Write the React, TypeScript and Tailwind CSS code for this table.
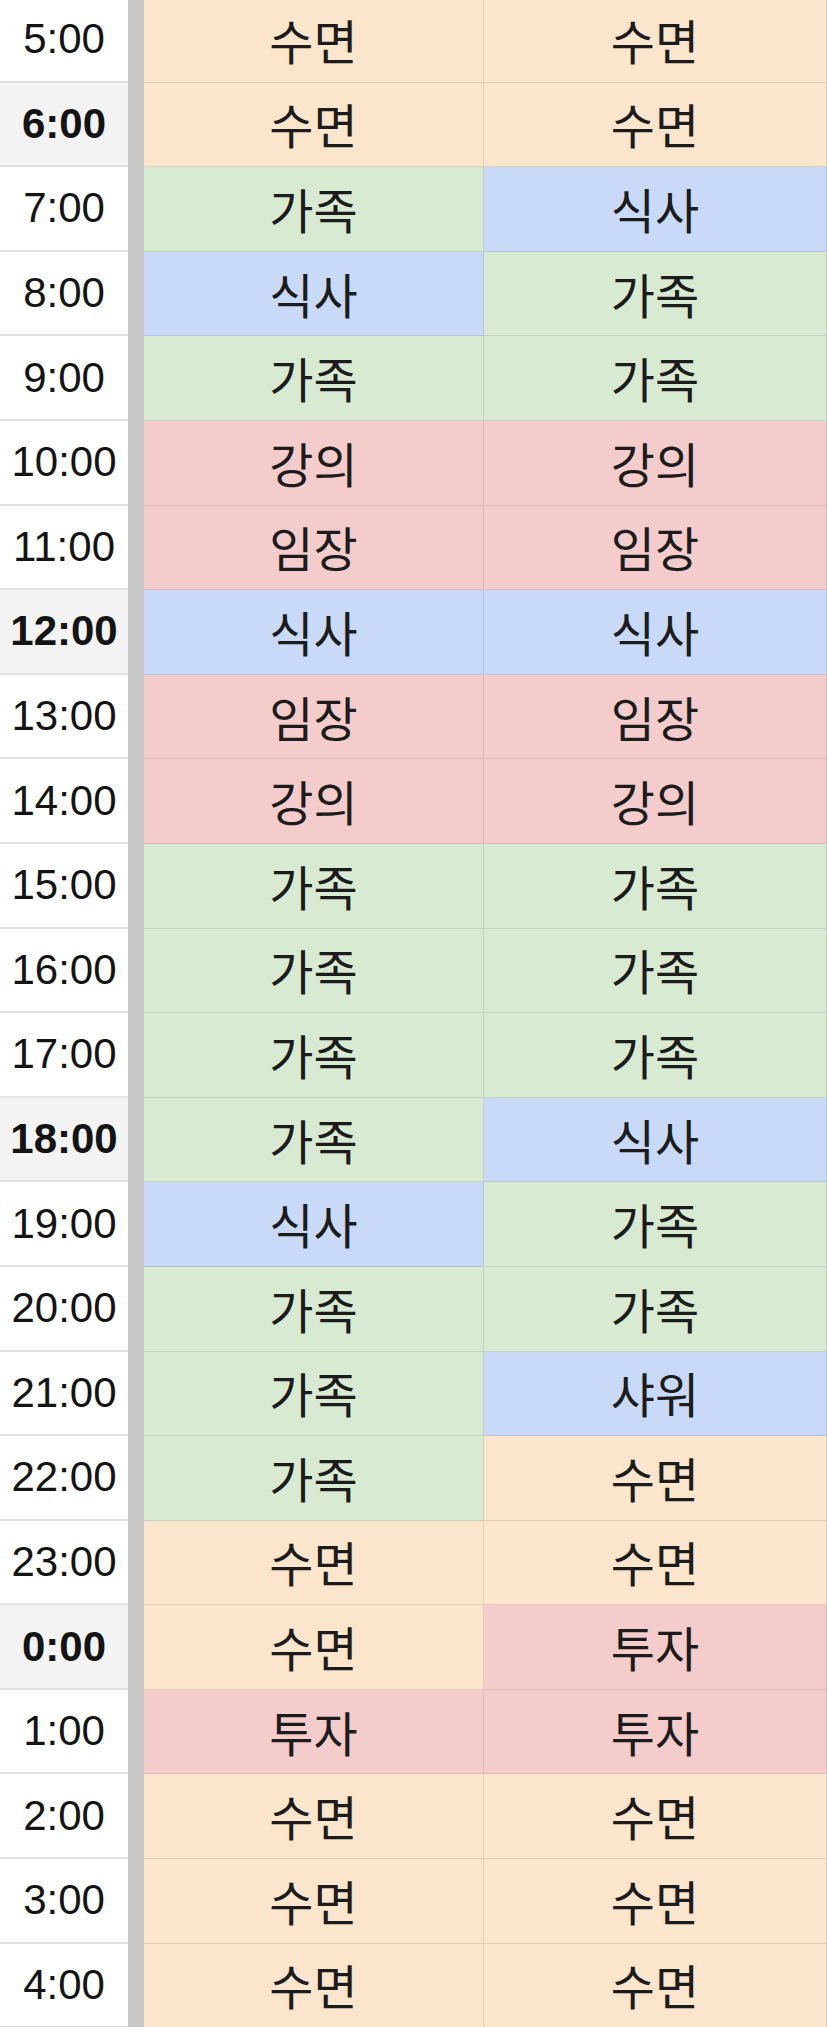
import React from 'react';

type Kind = 'sleep' | 'family' | 'meal' | 'work';

interface Row {
  time: string;
  bold?: boolean;
  a: [string, Kind];
  b: [string, Kind];
}

const kindBg: Record<Kind, string> = {
  sleep: 'bg-[#fce5cd]',
  family: 'bg-[#d9ead3]',
  meal: 'bg-[#c9daf8]',
  work: 'bg-[#f4cccc]',
};

const S: [string, Kind] = ['수면', 'sleep'];
const F: [string, Kind] = ['가족', 'family'];
const M: [string, Kind] = ['식사', 'meal'];
const L: [string, Kind] = ['강의', 'work'];
const I: [string, Kind] = ['임장', 'work'];
const T: [string, Kind] = ['투자', 'work'];
const W: [string, Kind] = ['샤워', 'meal'];

const rows: Row[] = [
  { time: '5:00', a: S, b: S },
  { time: '6:00', bold: true, a: S, b: S },
  { time: '7:00', a: F, b: M },
  { time: '8:00', a: M, b: F },
  { time: '9:00', a: F, b: F },
  { time: '10:00', a: L, b: L },
  { time: '11:00', a: I, b: I },
  { time: '12:00', bold: true, a: M, b: M },
  { time: '13:00', a: I, b: I },
  { time: '14:00', a: L, b: L },
  { time: '15:00', a: F, b: F },
  { time: '16:00', a: F, b: F },
  { time: '17:00', a: F, b: F },
  { time: '18:00', bold: true, a: F, b: M },
  { time: '19:00', a: M, b: F },
  { time: '20:00', a: F, b: F },
  { time: '21:00', a: F, b: W },
  { time: '22:00', a: F, b: S },
  { time: '23:00', a: S, b: S },
  { time: '0:00', bold: true, a: S, b: T },
  { time: '1:00', a: T, b: T },
  { time: '2:00', a: S, b: S },
  { time: '3:00', a: S, b: S },
  { time: '4:00', a: S, b: S },
];

// one coloured activity cell
const Cell: React.FC<{ item: [string, Kind]; last?: boolean }> = ({ item, last }) => (
  <div
    className={`flex items-center justify-center border-b border-r border-black/10 ${
      last ? 'flex-1' : 'w-[340px]'
    } ${kindBg[item[1]]} text-[48px] leading-none text-[#1c1c1c]`}
  >
    <span className="-mt-[2px]">{item[0]}</span>
  </div>
);

export default function App() {
  return (
    <div
      className="w-[827px] h-[2027px] overflow-hidden bg-white"
      style={{ fontFamily: '"Noto Sans CJK KR", "Noto Sans", sans-serif' }}
    >
      <div className="-mt-[2px] flex flex-col">
        {rows.map((r) => (
          <div key={r.time} className="flex h-[84.6px]">
            <div
              className={`w-[128px] flex items-center justify-center border-b-2 border-[#e2e2e2] text-[42px] leading-none text-[#141414] font-['Liberation_Sans',Arial,sans-serif] ${
                r.bold ? 'bg-[#f3f3f3] font-bold' : 'bg-white'
              }`}
            >
              {r.time}
            </div>
            <div className="w-[16px] bg-[#c8c8c8]" />
            <Cell item={r.a} />
            <Cell item={r.b} last />
          </div>
        ))}
      </div>
    </div>
  );
}
